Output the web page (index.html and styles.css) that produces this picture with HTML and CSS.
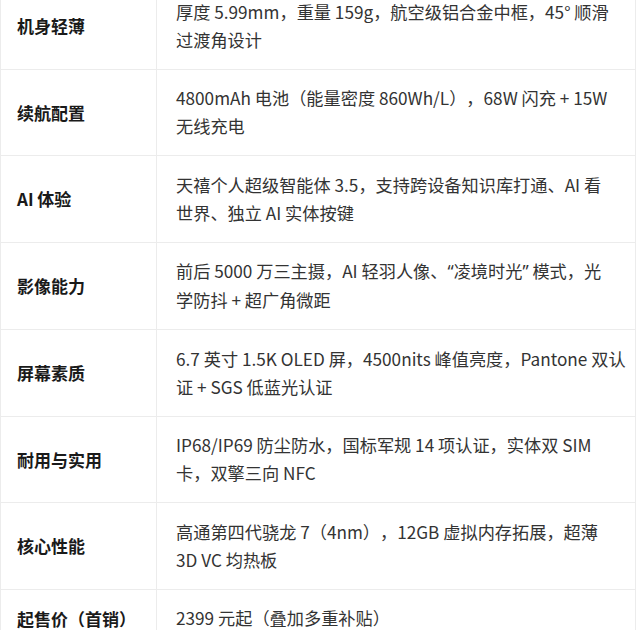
FILE: index.html
```html
<!DOCTYPE html>
<html lang="zh-CN">
<head>
<meta charset="utf-8">
<title>参数</title>
<link rel="stylesheet" href="styles.css">
</head>
<body>
<table class="spec">
  <tbody>
    <tr><th>机身轻薄</th><td>厚度 5.99mm，重量 159g，航空级铝合金中框，45° 顺滑<br>过渡角设计</td></tr>
    <tr><th>续航配置</th><td>4800mAh 电池（能量密度 860Wh/L），68W 闪充 + 15W<br>无线充电</td></tr>
    <tr><th>AI 体验</th><td>天禧个人超级智能体 3.5，支持跨设备知识库打通、AI 看<br>世界、独立 AI 实体按键</td></tr>
    <tr><th>影像能力</th><td>前后 5000 万三主摄，AI 轻羽人像、<span class="q">“</span>凌境时光<span class="q">”</span> 模式，光<br>学防抖 + 超广角微距</td></tr>
    <tr><th>屏幕素质</th><td>6.7 英寸 1.5K OLED 屏，4500nits 峰值亮度，Pantone 双认<br>证 + SGS 低蓝光认证</td></tr>
    <tr><th>耐用与实用</th><td>IP68/IP69 防尘防水，国标军规 14 项认证，实体双 SIM<br>卡，双擎三向 NFC</td></tr>
    <tr><th>核心性能</th><td>高通第四代骁龙 7（4nm），12GB 虚拟内存拓展，超薄<br>3D VC 均热板</td></tr>
    <tr><th>起售价（首销）</th><td>2399 元起（叠加多重补贴）</td></tr>
  </tbody>
</table>
</body>
</html>
```
FILE: styles.css
```css
html, body {
  margin: 0;
  padding: 0;
  background: #ffffff;
}
body {
  font-family: "Noto Sans CJK SC", "Noto Sans", sans-serif;
  color: #333333;
  overflow: hidden;
  text-spacing-trim: space-all;
}
.spec {
  border-collapse: collapse;
  width: 636px;
  margin-top: -18px;
  table-layout: fixed;
}
.spec th,
.spec td {
  border: 1px solid #ececec;
  text-align: left;
  white-space: nowrap;
}
.spec th {
  width: 156px;
  box-sizing: border-box;
  padding: 0 0 0 16px;
  font-size: 17px;
  font-weight: 700;
  color: #1a1a1a;
  vertical-align: middle;
}
.spec td {
  padding: 14.75px 16px 14.75px 19px;
  font-size: 17.2px;
  line-height: 28px;
  font-weight: 400;
  vertical-align: top;
}
.q {
  font-family: "Noto Sans", sans-serif;
}
```
